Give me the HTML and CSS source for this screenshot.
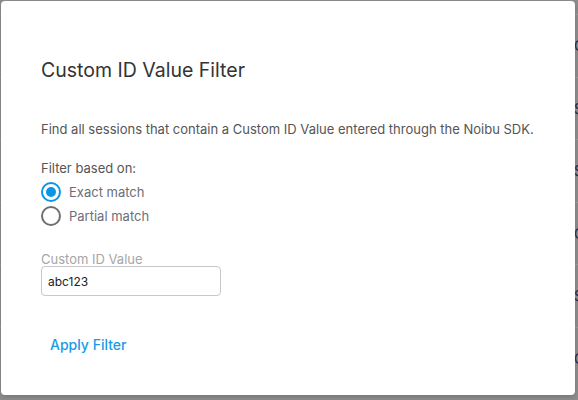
FILE: index.html
```html
<!DOCTYPE html>
<html>
<head>
<meta charset="utf-8">
<link rel="stylesheet" href="styles.css">
</head>
<body>
<div class="page">
  <div class="rows">
    <div class="row">C</div>
    <div class="row">S</div>
    <div class="row">S</div>
    <div class="row">C</div>
    <div class="row">S</div>
    <div class="row">C</div>
  </div>
  <div class="dialog">
    <h2 class="title">Custom ID Value Filter</h2>
    <p class="desc">Find all sessions that contain a Custom ID Value entered through the Noibu SDK.</p>
    <div class="group-label">Filter based on:</div>
    <div class="radios">
      <label class="radio"><span class="circle checked"></span><span class="rlabel">Exact match</span></label>
      <label class="radio"><span class="circle"></span><span class="rlabel">Partial match</span></label>
    </div>
    <div class="field">
      <div class="field-label">Custom ID Value</div>
      <div class="input">abc123</div>
    </div>
    <div class="actions">
      <span class="apply">Apply Filter</span>
    </div>
  </div>
</div>
</body>
</html>
```
FILE: styles.css
```css
html, body {
  margin: 0;
  padding: 0;
}
body {
  width: 578px;
  height: 400px;
  overflow: hidden;
  font-family: "Inter Variable", Inter, "Noto Sans", sans-serif;
  background: #8c8c8c;
}
.page {
  position: relative;
  width: 578px;
  height: 400px;
  overflow: hidden;
}
.rows {
  padding-top: 14px;
}
.row {
  height: 62.5px;
  box-sizing: border-box;
  border-top: 1px solid #9c9c9c;
  padding-left: 574px;
  display: flex;
  align-items: center;
  font-size: 14px;
  color: #2a2545;
  white-space: nowrap;
}
.dialog {
  position: absolute;
  left: 1px;
  top: 1px;
  width: 574px;
  height: 394px;
  box-sizing: border-box;
  background: #fff;
  border-radius: 4px;
  padding: 58px 40px 0 40px;
  box-shadow: 0 2px 4px rgba(0,0,0,0.15);
}
.title {
  margin: 0;
  font-size: 19.5px;
  font-weight: 400;
  line-height: 22px;
  color: #333333;
}
.desc {
  margin: 40px 0 0 0;
  font-size: 13px;
  line-height: 16px;
  color: #555555;
  white-space: nowrap;
}
.group-label {
  margin-top: 23px;
  font-size: 13px;
  line-height: 16px;
  color: #555555;
}
.radios {
  margin-top: 6px;
  display: flex;
  flex-direction: column;
  gap: 4px;
}
.radio {
  display: flex;
  align-items: center;
  gap: 8px;
  height: 20px;
}
.circle {
  width: 20px;
  height: 20px;
  box-sizing: border-box;
  border: 2px solid #6f6f6f;
  border-radius: 50%;
  display: flex;
  align-items: center;
  justify-content: center;
}
.circle.checked {
  border-color: #0b96e5;
}
.circle.checked::after {
  content: "";
  width: 10px;
  height: 10px;
  border-radius: 50%;
  background: #0b96e5;
}
.rlabel {
  font-size: 13px;
  color: #6d6d78;
}
.field {
  margin-top: 26px;
}
.field-label {
  font-size: 13px;
  line-height: 14px;
  color: #a6a6a6;
}
.input {
  margin-top: 0;
  width: 180px;
  height: 30px;
  box-sizing: border-box;
  border: 1px solid #c8c8cc;
  border-radius: 4px;
  padding: 0 6px;
  display: flex;
  align-items: center;
  font-size: 12px;
  color: #222;
}
.actions {
  margin-top: 38px;
  padding-left: 9px;
}
.apply {
  font-size: 14px;
  font-weight: 500;
  color: #1a9be6;
}
```
